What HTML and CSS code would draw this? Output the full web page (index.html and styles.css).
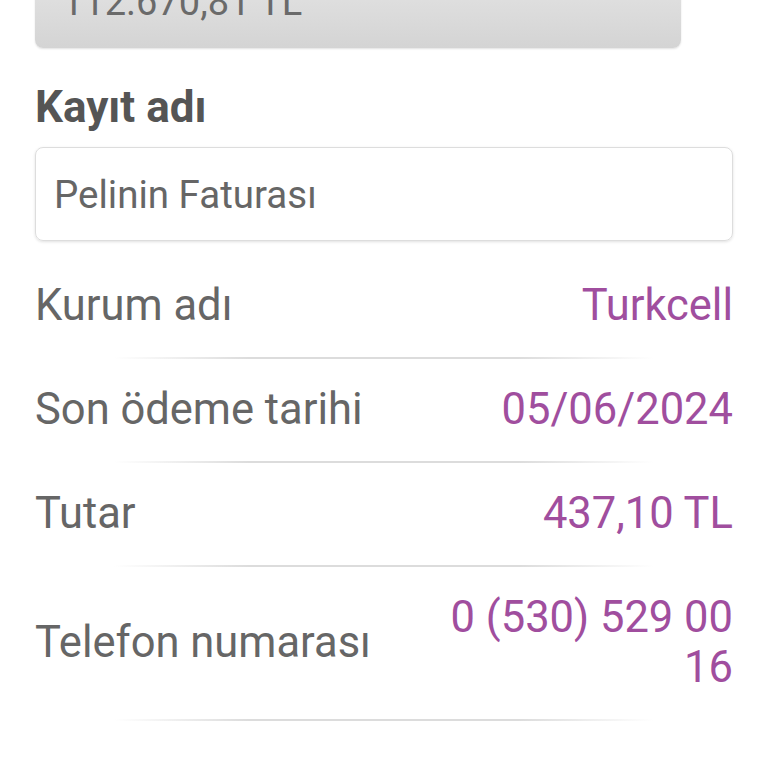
FILE: index.html
```html
<!DOCTYPE html>
<html lang="tr">
<head>
    <meta charset="UTF-8">
    <meta name="viewport" content="width=device-width, initial-scale=1.0">
    <title>Fatura Detayı</title>
    <link rel="stylesheet" href="styles.css">
</head>
<body>
    <div class="page">
        <!-- Balance box, scrolled partly out of view -->
        <div class="balance">112.670,81 TL</div>

        <h2 class="field-title">Kayıt adı</h2>
        <div class="text-input">Pelinin Faturası</div>

        <!-- Bill details -->
        <div class="details">
            <div class="row">
                <span class="label">Kurum adı</span>
                <span class="value">Turkcell</span>
            </div>
            <div class="divider"></div>
            <div class="row">
                <span class="label">Son ödeme tarihi</span>
                <span class="value">05/06/2024</span>
            </div>
            <div class="divider"></div>
            <div class="row">
                <span class="label">Tutar</span>
                <span class="value">437,10 TL</span>
            </div>
            <div class="divider"></div>
            <div class="row">
                <span class="label">Telefon numarası</span>
                <span class="value">0 (530) 529 00 16</span>
            </div>
            <div class="divider"></div>
        </div>
    </div>
</body>
</html>
```

FILE: styles.css
```css
body {
    margin: 0;
    font-family: Roboto, "Noto Sans", Arial, sans-serif;
    background-color: #fff;
    color: #666;
}

.page {
    padding: 0 35px;
}

/* Grey balance box at the top, partly hidden */
.balance {
    margin-top: -23px;
    margin-right: 52px;
    padding: 0 27px 21px;
    font-size: 38px;
    line-height: 50px;
    color: #6a6a6a;
    background: linear-gradient(#e3e3e3, #d4d4d4);
    border-radius: 0 0 8px 8px;
    box-shadow: 0 1px 2px rgba(0, 0, 0, 0.12);
}

.field-title {
    margin: 33px 0 14px;
    font-size: 44px;
    line-height: 52px;
    font-weight: 700;
    color: #555;
}

.text-input {
    height: 92px;
    display: flex;
    align-items: center;
    padding: 0 18px;
    font-size: 38.5px;
    color: #666;
    border: 1px solid #ddd;
    border-radius: 8px;
    box-shadow: 0 1px 3px rgba(0, 0, 0, 0.12);
}

.details {
    margin-top: 14px;
}

.row {
    display: flex;
    justify-content: space-between;
    align-items: center;
    padding: 26px 0;
    font-size: 43.5px;
    line-height: 50px;
}

.label {
    color: #666;
}

.value {
    max-width: 300px;
    text-align: right;
    color: #a04e9e;
}

/* Soft fading line between rows */
.divider {
    height: 2px;
    margin: 0 auto;
    width: 540px;
    background: linear-gradient(to right, rgba(221, 221, 221, 0), #dcdcdc 25%, #dcdcdc 75%, rgba(221, 221, 221, 0));
}
```
